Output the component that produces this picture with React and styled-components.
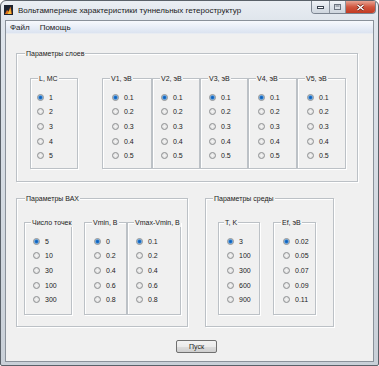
import styled, { createGlobalStyle } from "styled-components"

const GlobalStyle = createGlobalStyle`
    * { box-sizing: border-box; }
    body {
        margin: 0;
        background: #ffffff;
        font-family: "Liberation Sans", Arial, sans-serif;
    }
`

const Window = styled.div`
    width: 379px;
    height: 366px;
    display: flex;
    flex-direction: column;
    border: 1px solid #5a6169;
    border-radius: 6px 6px 2px 2px;
    background: linear-gradient(180deg, #eaeef3 0px, #dfe5ec 20px, #c9d0d8 100%);
    padding: 0 4px 3px 4px;
    overflow: hidden;
`

const TitleBar = styled.div`
    height: 19px;
    display: flex;
    align-items: flex-start;
    flex-shrink: 0;
`

const AppIcon = styled.svg`
    width: 9px;
    height: 10px;
    margin: 4px 5px 0 -1px;
`

const Title = styled.span`
    font-size: 8px;
    line-height: 19px;
    color: #1a1a1a;
    white-space: nowrap;
`

const Controls = styled.div`
    margin-left: auto;
    margin-right: -2px;
    display: flex;
    height: 13px;
    border: 1px solid #7b8490;
    border-top: none;
    border-radius: 0 0 4px 4px;
    overflow: hidden;
`

const CtrlBtn = styled.div`
    width: ${p => p.w}px;
    height: 100%;
    display: flex;
    align-items: center;
    justify-content: center;
    background: ${p => p.close
        ? "linear-gradient(180deg, #e8a493 0%, #d0563f 50%, #c23a22 100%)"
        : "linear-gradient(180deg, #f1f4f8 0%, #dde3ea 50%, #cfd6de 100%)"};
    border-left: ${p => p.first ? "none" : "1px solid #8b939d"};
`

const Client = styled.div`
    flex: 1;
    display: flex;
    flex-direction: column;
    border: 1px solid #8a919a;
    background: #f0f0f0;
`

const MenuBar = styled.div`
    height: 13px;
    display: flex;
    align-items: center;
    gap: 10px;
    padding-left: 4px;
    font-size: 8px;
    color: #1e1e1e;
    background: linear-gradient(180deg, #f7f9fd 0%, #e6ecf6 60%, #dbe3f0 100%);
    border-bottom: 1px solid #e8ecf2;
`

const Content = styled.div`
    flex: 1;
    display: flex;
    flex-direction: column;
    align-items: flex-start;
    padding: 19px 0 0 10px;
`

const Row = styled.div`
    display: flex;
    align-items: flex-start;
    gap: ${p => p.gap || 0}px;
    margin-top: ${p => p.top || 0}px;
`

const Group = styled.div`
    position: relative;
    width: ${p => p.w}px;
    height: ${p => p.h}px;
    padding: ${p => p.pt}px 0 0 ${p => p.pl}px;
    border: 1px solid #bcc1c6;
    box-shadow: inset 1px 1px 0 #ffffff, 1px 1px 0 #ffffff;
    display: flex;
    align-items: flex-start;
`

const Legend = styled.span`
    position: absolute;
    top: -5px;
    left: ${p => p.left || 7}px;
    padding: 0 1px;
    font-size: 7px;
    line-height: 9px;
    color: #222;
    background: #f0f0f0;
    white-space: nowrap;
`

const Box = styled.div`
    position: relative;
    width: ${p => p.w}px;
    height: ${p => p.h}px;
    margin-right: ${p => p.mr || 0}px;
    padding-top: 11px;
    border: 1px solid #bcc1c6;
    box-shadow: inset 1px 1px 0 #ffffff, 1px 1px 0 #ffffff;
    flex-shrink: 0;
`

const Option = styled.div`
    height: 14.6px;
    display: flex;
    align-items: center;
    padding-left: ${p => p.pad}px;
`

const Radio = styled.span`
    width: 7px;
    height: 7px;
    border-radius: 50%;
    border: 1px solid #8e9092;
    flex-shrink: 0;
    background: ${p => p.checked
        ? "radial-gradient(circle, #0d5fb8 0, #1b6fc8 1.3px, #7fb4e6 2.2px, #e4e9ee 3px)"
        : "radial-gradient(circle, #f6f6f6 0, #e4e4e4 2px, #d6d6d6 3.5px)"};
`

const OptLabel = styled.span`
    margin-left: 5px;
    font-size: 7px;
    color: #222;
`

const Button = styled.button`
    margin: 13px 0 0 160px;
    width: 41px;
    height: 13px;
    padding: 0;
    border: 1px solid #707070;
    border-radius: 2px;
    background: linear-gradient(180deg, #f3f3f3 0%, #ebebeb 50%, #dddddd 51%, #cfcfcf 100%);
    font-family: inherit;
    font-size: 7px;
    color: #222;
`

const layers = [
    { title: "L, MC", w: 48, pad: 6, mr: 24, values: ["1", "2", "3", "4", "5"] },
    { title: "V1, эВ", w: 50, pad: 9, values: ["0.1", "0.2", "0.3", "0.4", "0.5"] },
    { title: "V2, эВ", w: 48, pad: 8, values: ["0.1", "0.2", "0.3", "0.4", "0.5"] },
    { title: "V3, эВ", w: 48, pad: 8, values: ["0.1", "0.2", "0.3", "0.4", "0.5"] },
    { title: "V4, эВ", w: 49, pad: 9, values: ["0.1", "0.2", "0.3", "0.4", "0.5"] },
    { title: "V5, эВ", w: 49, pad: 9, values: ["0.1", "0.2", "0.3", "0.4", "0.5"] },
]

const vax = [
    { title: "Число точек", w: 48, pad: 8, mr: 12, left: 6, values: ["5", "10", "30", "100", "300"] },
    { title: "Vmin, B", w: 43, pad: 9, values: ["0", "0.2", "0.4", "0.6", "0.8"] },
    { title: "Vmax-Vmin, B", w: 54, pad: 8, left: 6, values: ["0.1", "0.2", "0.4", "0.6", "0.8"] },
]

const env = [
    { title: "T, K", w: 42, pad: 8, mr: 13, left: 5, values: ["3", "100", "300", "600", "900"] },
    { title: "Ef, эВ", w: 43, pad: 9, values: ["0.02", "0.05", "0.07", "0.09", "0.11"] },
]

const RadioBox = ({ item, h }) => (
    <Box w={item.w} h={h} mr={item.mr}>
        <Legend left={item.left}>{item.title}</Legend>
        {item.values.map((v, i) => (
            <Option key={v} pad={item.pad}>
                <Radio checked={i === 0} />
                <OptLabel>{v}</OptLabel>
            </Option>
        ))}
    </Box>
)

const App = () => {
    return (
        <>
            <GlobalStyle />
            <Window>
                <TitleBar>
                    <AppIcon viewBox="0 0 9 10">
                        <rect x="0" y="0" width="9" height="10" fill="#1d2430" />
                        <path d="M1 9 L3 5 L4.5 6.5 L6.5 1.5 L8 9 Z" fill="#e0701c" />
                        <path d="M3.5 9 L4.8 6.8 L6.4 3.5 L7 9 Z" fill="#f6c33a" />
                    </AppIcon>
                    <Title>Вольтамперные характеристики туннельных гетероструктур</Title>
                    <Controls>
                        <CtrlBtn w={17} first>
                            <svg width="7" height="3" viewBox="0 0 7 3">
                                <rect x="0.5" y="0.5" width="6" height="2" fill="#fff" stroke="#3a4350" />
                            </svg>
                        </CtrlBtn>
                        <CtrlBtn w={16}>
                            <svg width="7" height="6" viewBox="0 0 7 6">
                                <rect x="0.5" y="0.5" width="6" height="5" fill="none" stroke="#6b7480" />
                                <rect x="1.5" y="1.5" width="4" height="1" fill="#6b7480" />
                            </svg>
                        </CtrlBtn>
                        <CtrlBtn w={30} close>
                            <svg width="9" height="7" viewBox="0 0 9 7">
                                <path d="M1.5 1 L7.5 6 M7.5 1 L1.5 6" stroke="#5a1a10" strokeWidth="2.6" />
                                <path d="M1.5 1 L7.5 6 M7.5 1 L1.5 6" stroke="#ffffff" strokeWidth="1.5" />
                            </svg>
                        </CtrlBtn>
                    </Controls>
                </TitleBar>
                <Client>
                    <MenuBar>
                        <span>Файл</span>
                        <span>Помощь</span>
                    </MenuBar>
                    <Content>
                        <Group w={342} h={129} pt={24} pl={13}>
                            <Legend left={8}>Параметры слоев</Legend>
                            {layers.map(l => <RadioBox key={l.title} item={l} h={91} />)}
                        </Group>
                        <Row gap={17} top={16}>
                            <Group w={172} h={129} pt={23} pl={7}>
                                <Legend left={8}>Параметры ВАХ</Legend>
                                {vax.map(l => <RadioBox key={l.title} item={l} h={93} />)}
                            </Group>
                            <Group w={129} h={129} pt={23} pl={12}>
                                <Legend left={7}>Параметры среды</Legend>
                                {env.map(l => <RadioBox key={l.title} item={l} h={93} />)}
                            </Group>
                        </Row>
                        <Button>Пуск</Button>
                    </Content>
                </Client>
            </Window>
        </>
    )
}

export default App
